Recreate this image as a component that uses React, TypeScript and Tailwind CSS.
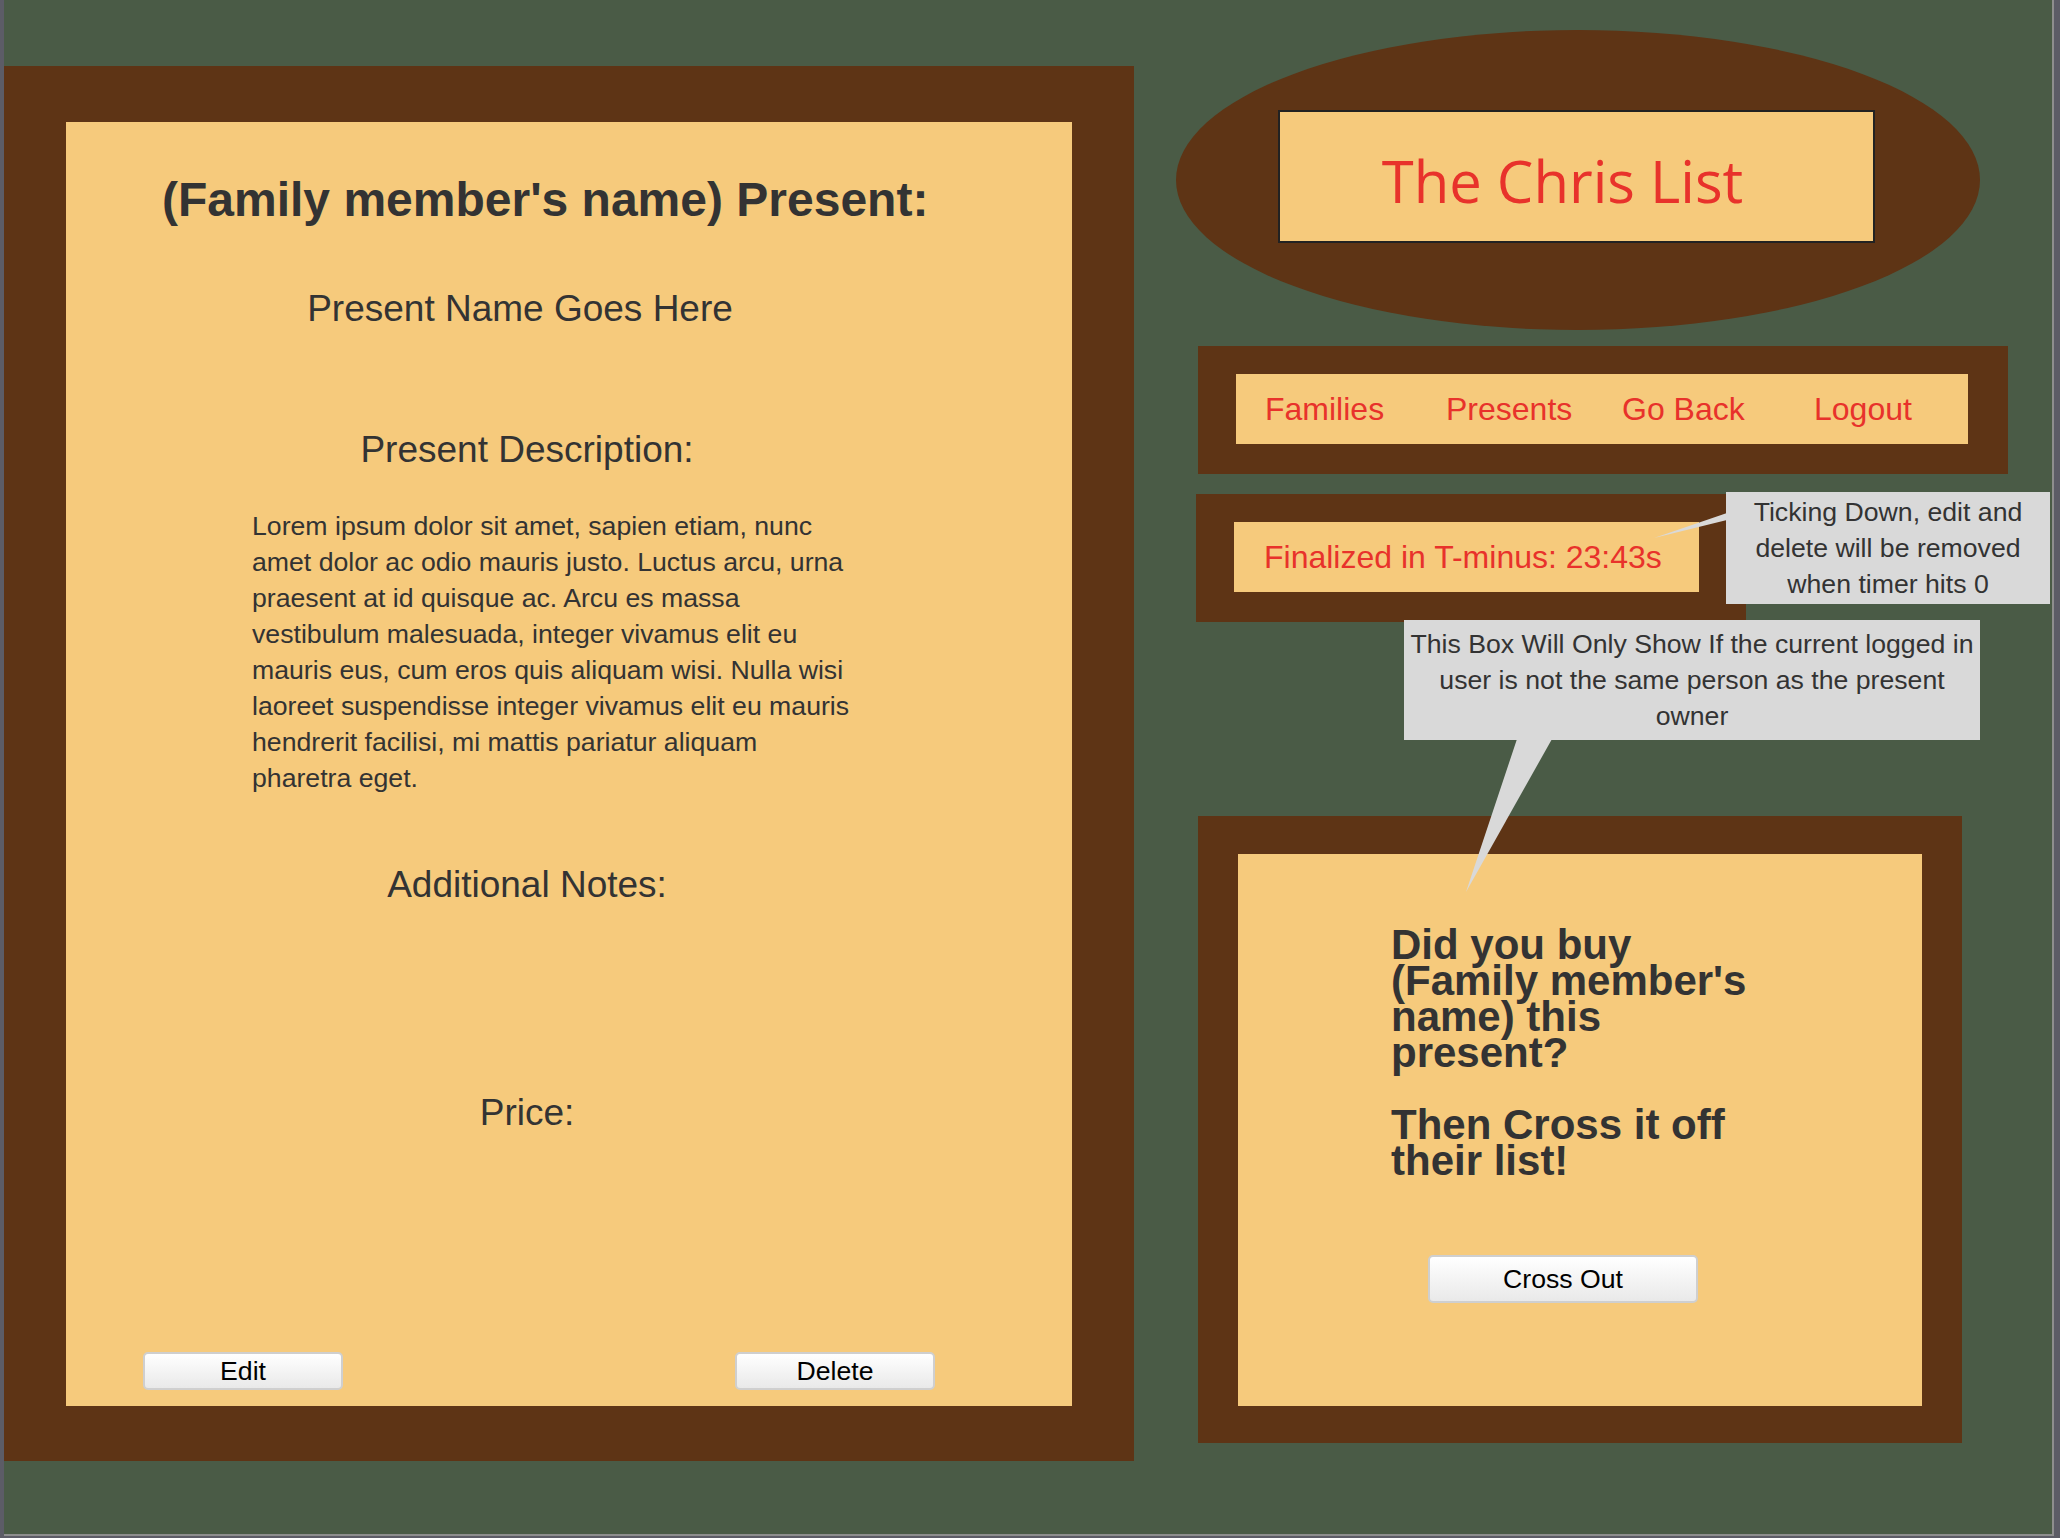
const loremLines = [
  "Lorem ipsum dolor sit amet, sapien etiam, nunc",
  "amet dolor ac odio mauris justo. Luctus arcu, urna",
  "praesent at id quisque ac. Arcu es massa",
  "vestibulum malesuada, integer vivamus elit eu",
  "mauris eus, cum eros quis aliquam wisi. Nulla wisi",
  "laoreet suspendisse integer vivamus elit eu mauris",
  "hendrerit facilisi, mi mattis pariatur aliquam",
  "pharetra eget.",
];

const navLinks = [
  { name: "Families", width: "w-[181px]" },
  { name: "Presents", width: "w-[176px]" },
  { name: "Go Back", width: "w-[192px]" },
  { name: "Logout", width: "" },
];

function PlainButton({ label, className }: { label: string; className: string }) {
  return (
    <button
      className={`flex items-center justify-center rounded-[5px] border-2 border-[#cfcfcf] bg-linear-to-b from-white to-[#e9e9e9] text-[26.67px] leading-none text-black ${className}`}
    >
      {label}
    </button>
  );
}

export default function App() {
  return (
    <div className="relative h-[1538px] w-[2060px] overflow-hidden border-b-2 border-l-4 border-r-[6px] border-[#5c5c66] bg-[#4a5b46] font-['Liberation_Sans',Arial,sans-serif] text-[#333333]">
      <div className="flex h-full w-full items-start border-b-2 border-r-2 border-[#8e8e8e]">
        {/* --- left: present details --- */}
        <div className="mt-[66px] h-[1395px] w-[1130px] shrink-0 bg-[#5e3415] pb-[55px] pl-[62px] pr-[62px] pt-[56px]">
          <div className="flex h-full w-full flex-col bg-[#f6ca7c]">
            <h1 className="mt-[50px] pl-[96px] text-[48px] font-bold leading-[56px]">
              (Family member's name) Present:
            </h1>

            <div className="w-[922px] text-center text-[37px] leading-[44px]">
              <p className="mt-[59px] pr-[14px]">Present Name Goes Here</p>
              <p className="mt-[97px]">Present Description:</p>
            </div>

            <p className="ml-[186px] mt-[36px] text-[26.67px] leading-[36px]">
              {loremLines.map((line) => (
                <span key={line} className="block whitespace-nowrap">
                  {line}
                </span>
              ))}
            </p>

            <div className="w-[922px] text-center text-[37px] leading-[44px]">
              <p className="mt-[67px]">Additional Notes:</p>
              <p className="mt-[184px]">Price:</p>
            </div>

            <div className="mt-auto flex pb-[16px] pl-[77px]">
              <PlainButton label="Edit" className="h-[38px] w-[200px]" />
              <PlainButton label="Delete" className="ml-[392px] h-[38px] w-[200px]" />
            </div>
          </div>
        </div>

        {/* --- right column --- */}
        <div className="flex flex-col">
          {/* logo */}
          <div className="ml-[42px] mt-[30px] flex h-[300px] w-[804px] items-center justify-center rounded-[50%] bg-[#5e3415] pb-[7px] pr-[3px]">
            <div className="flex h-[133px] w-[597px] items-center justify-center border-2 border-[#222222] bg-[#f6ca7c] pr-[28px] pt-[8px]">
              <span className="font-['Open_Sans',sans-serif] text-[58px] leading-none text-[#e8322b]">
                The Chris List
              </span>
            </div>
          </div>

          {/* nav */}
          <div className="ml-[64px] mt-[16px] h-[128px] w-[810px] bg-[#5e3415] pb-[30px] pl-[38px] pr-[40px] pt-[28px]">
            <nav className="flex h-full items-center bg-[#f6ca7c] pl-[29px] text-[32px] text-[#e8322b]">
              {navLinks.map((link) => (
                <a key={link.name} className={`block ${link.width}`}>
                  {link.name}
                </a>
              ))}
            </nav>
          </div>

          {/* timer */}
          <div className="ml-[62px] mt-[20px] h-[128px] w-[550px] bg-[#5e3415] pl-[38px] pt-[28px]">
            <div className="flex h-[70px] w-[465px] items-center bg-[#f6ca7c] pl-[30px] text-[32px] text-[#e8322b]">
              Finalized in T-minus: 23:43s
            </div>
          </div>

          {/* cross out */}
          <div className="ml-[64px] mt-[194px] h-[627px] w-[764px] bg-[#5e3415] pb-[37px] pl-[40px] pr-[40px] pt-[38px]">
            <div className="flex h-full w-full flex-col bg-[#f6ca7c]">
              <h2 className="ml-[153px] mt-[73px] text-[42px] font-bold leading-[36px]">
                Did you buy
                <br />
                (Family member's
                <br />
                name) this
                <br />
                present?
                <br />
                <br />
                Then Cross it off
                <br />
                their list!
              </h2>
              <PlainButton label="Cross Out" className="ml-[190px] mt-[76px] h-[48px] w-[270px]" />
            </div>
          </div>
        </div>
      </div>

      {/* --- annotation callouts --- */}
      <div className="pointer-events-none absolute -left-[4px] top-0 h-[1538px] w-[2060px]">
        <svg className="absolute left-0 top-0" width="2060" height="1538">
          <polygon points="1727,513 1727,520 1654,538" fill="#d9d9d9" />
          <polygon points="1517,739 1552,739 1466,892" fill="#d9d9d9" />
        </svg>
        <div className="absolute left-[1726px] top-[492px] flex h-[112px] w-[324px] items-center justify-center bg-[#d9d9d9] text-center text-[26.67px] leading-[36px]">
          <p>
            Ticking Down, edit and
            <br />
            delete will be removed
            <br />
            when timer hits 0
          </p>
        </div>
        <div className="absolute left-[1404px] top-[620px] flex h-[120px] w-[576px] items-center justify-center bg-[#d9d9d9] text-center text-[26.67px] leading-[36px]">
          <p>
            This Box Will Only Show If the current logged in
            <br />
            user is not the same person as the present
            <br />
            owner
          </p>
        </div>
      </div>
    </div>
  );
}
